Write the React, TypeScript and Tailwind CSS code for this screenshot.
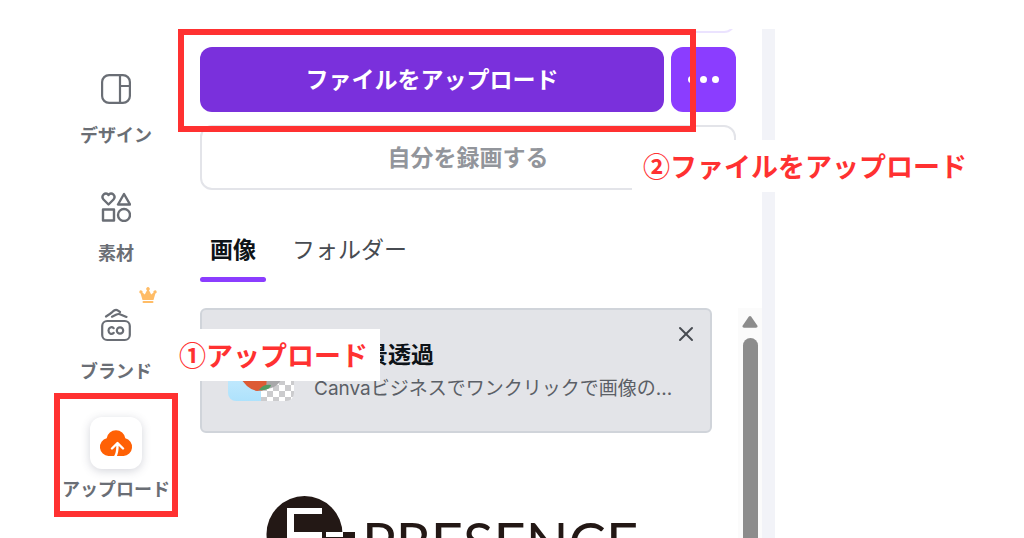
import { type ReactNode } from "react";
import { X } from "lucide-react";

const navItems = [
  { label: "デザイン", icon: <DesignIcon /> },
  { label: "素材", icon: <ElementsIcon /> },
  { label: "ブランド", icon: <BrandIcon />, premium: true },
  { label: "アップロード", icon: <CloudIcon />, active: true }
];

export default function App() {
  return (
    <main className="flex h-screen overflow-hidden bg-white pt-[29px] font-['Noto_Sans_CJK_JP',sans-serif] text-[#0e1318]">
      <SideNav />
      <UploadPanel />
    </main>
  );
}

function SideNav() {
  return (
    <nav className="ml-[54px] w-[124px] shrink-0 pt-[34px]">
      <ul className="flex flex-col gap-[35px]">
        {navItems.map((item) => (
          <li key={item.label} className="relative">
            <button type="button" className="flex w-full flex-col items-center gap-[7px] whitespace-nowrap text-[18px] leading-6 font-bold text-[#6a6e75]">
              <span className={item.active ? "grid size-[52px] place-items-center rounded-xl bg-white shadow-[0_2px_10px_rgba(60,64,90,0.22)]" : "grid size-[52px] place-items-center"}>
                {item.icon}
              </span>
              {item.label}
            </button>
            {item.premium && <CrownIcon className="absolute top-[-12px] left-[85px] h-4 w-[18px]" />}
            {item.active && <div className="pointer-events-none absolute inset-x-0 top-[-24px] bottom-[-17px] border-6 border-[#ff3131]" />}
          </li>
        ))}
      </ul>
    </nav>
  );
}

function UploadPanel() {
  return (
    <section className="relative flex max-w-[597px] flex-1 flex-col border-r-[13px] border-[#f2f3f8] pl-[22px]">
      <div className="mr-[26px] flex h-1 shrink-0 items-end overflow-hidden">
        <div className="h-12 w-full shrink-0 rounded-xl border-2 border-[#ebe3ff]" />
      </div>
      <div className="mt-[14px] mr-[26px] flex gap-[7px]">
        <button type="button" className="h-[65px] flex-1 rounded-xl bg-[#7a30dc] pb-[2px] text-[23px] font-bold text-white">ファイルをアップロード</button>
        <button type="button" aria-label="その他" className="flex h-[65px] w-[65px] items-center justify-center gap-[5px] rounded-xl bg-[#8b3dff]">
          <span className="size-[7px] rounded-full bg-white" />
          <span className="size-[7px] rounded-full bg-white" />
          <span className="size-[7px] rounded-full bg-white" />
        </button>
      </div>
      <button type="button" className="mt-[13px] mr-[26px] h-[65px] shrink-0 rounded-xl border-2 border-[#e3e4e9] pb-[2px] text-[23px] font-bold text-[#92959b]">自分を録画する</button>

      <div role="tablist" className="mt-[40px] flex gap-[18px] text-[23px] leading-9">
        <button type="button" role="tab" aria-selected="true" className="flex flex-col gap-[11px] font-bold">
          <span className="px-[10px]">画像</span>
          <span className="h-[5px] w-full rounded-full bg-[#8b3dff]" />
        </button>
        <button type="button" role="tab" aria-selected="false" className="flex flex-col px-2 text-[#474b51]">フォルダー</button>
      </div>

      <div className="mt-[26px] flex min-h-0 flex-1 gap-[26px]">
        <div className="min-w-0 flex-1">
          <Promo />
          <UploadedImage />
        </div>
        <Scrollbar />
      </div>

      <div className="pointer-events-none absolute top-0 left-0 h-[103px] w-[518px] border-6 border-[#ff3131]" />
      <Callout className="top-[300px] left-[-10px]">①アップロード</Callout>
      <Callout className="top-[111px] left-[454px]">②ファイルをアップロード</Callout>
    </section>
  );
}

function Promo() {
  return (
    <article className="relative flex h-[125px] items-start gap-5 rounded-md border-2 border-[#d0d4da] bg-[#e3e4e8] pt-[25px] pl-[26px]">
      <Thumbnail />
      <div className="min-w-0 whitespace-nowrap">
        <h2 className="flex h-9 items-center gap-2 text-[23px] font-bold">
          <CrownIcon className="h-[18px] w-5" />
          背景透過
        </h2>
        <p className="font-['Inter','Noto_Sans_CJK_JP',sans-serif] text-[19px] leading-9 text-[#5b5f66]">Canvaビジネスでワンクリックで画像の...</p>
      </div>
      <button type="button" aria-label="閉じる" className="absolute top-3 right-3 text-[#474b51]">
        <X className="size-6" strokeWidth={2} />
      </button>
    </article>
  );
}

function UploadedImage() {
  return (
    <figure className="mt-[63px] ml-[66px] flex items-start gap-[5px] text-[#231815]">
      <svg viewBox="0 0 91 76" className="h-[76px] w-[91px] shrink-0" aria-hidden="true">
        <circle cx="38.5" cy="38" r="38" fill="currentColor" />
        <path d="M21 12h35v6H28v18h28v6H28v19h28v6H21z" fill="#fff" />
        <path d="M75 36h14v6H75z" fill="currentColor" />
        <path d="M60 36h17v5H60z" fill="#fff" />
      </svg>
      <figcaption className="mt-[12px] font-['Lato',sans-serif] text-[56px] leading-[68px]">PRESENCE</figcaption>
    </figure>
  );
}

function Scrollbar() {
  return (
    <div className="flex w-6 shrink-0 flex-col items-center gap-[10px] bg-[#fbfbfb] pt-2" aria-hidden="true">
      <svg viewBox="0 0 16 12" className="h-3 w-4 shrink-0" fill="#8c8c8c">
        <path d="M6.700 .8q1.300-1.400 2.600 0l6 8.700q.9 2.100-1.300 2.300H2q-2.200-.2-1.300-2.300z" />
      </svg>
      <div className="w-[15px] flex-1 rounded-t-full bg-[#8c8c8c]" />
    </div>
  );
}

function Callout({ className, children }: { className: string; children: ReactNode }) {
  return (
    <p className={`absolute h-[52px] bg-white pr-[12px] pl-[11px] text-[27px] leading-[51px] font-bold whitespace-nowrap text-[#ff3131] ${className}`}>
      {children}
    </p>
  );
}

function Thumbnail() {
  return (
    <svg viewBox="0 0 66 66" className="size-[66px] shrink-0" aria-hidden="true">
      <defs>
        <clipPath id="thumb"><rect width="66" height="66" rx="8" /></clipPath>
        <pattern id="checker" width="12" height="12" x="33" y="2" patternUnits="userSpaceOnUse">
          <rect width="12" height="12" fill="#fff" />
          <path d="M0 0h6v6H0zM6 6h6v6H6z" fill="#cbcbcd" />
        </pattern>
        <linearGradient id="sky" x2="0" y2="1"><stop stopColor="#e4f6ff" /><stop offset="1" stopColor="#aee2fc" /></linearGradient>
      </defs>
      <g clipPath="url(#thumb)">
        <rect width="33" height="66" fill="url(#sky)" />
        <rect x="33" width="33" height="66" fill="url(#checker)" />
        <path d="M31 38h24q-2 14-16 16z" fill="#a8a8aa" />
        <path d="M11 40h28l-1 14q-4 2-9 2-11-2-18-16" fill="#dc5b35" />
        <path d="M31 55q4-6 12-5-1 6-12 5" fill="#4f9b62" />
      </g>
    </svg>
  );
}

function DesignIcon() {
  return (
    <svg viewBox="0 0 30 30" className="size-[30px]" fill="none" stroke="currentColor" strokeWidth="2.200">
      <rect x="1.100" y="1.100" width="27.800" height="27.800" rx="7" />
      <path d="M19 1v28M19 12h10" />
    </svg>
  );
}

function ElementsIcon() {
  return (
    <svg viewBox="0 0 30 30" className="size-[30px]" fill="none" stroke="currentColor" strokeWidth="2.400" strokeLinejoin="round">
      <path d="M7.500 12.500 2.500 7.500C-.5 4 4.500-1 7.500 3c3-4 8 1 5 4.500z" />
      <path d="M23 2 17 12.500h12z" />
      <rect x="2" y="17.500" width="11" height="11" />
      <circle cx="23" cy="23" r="6" />
    </svg>
  );
}

function BrandIcon() {
  return (
    <svg viewBox="0 0 30 34" className="h-[34px] w-[30px]" fill="none" stroke="currentColor" strokeWidth="2.200" strokeLinecap="round">
      <rect x="1.200" y="13" width="27.600" height="19" rx="5" />
      <path d="M5 8.500q4-2.500 6.500-4.700 3-3 5.500-1.200l2 1.400M11 8.700l4-2q2.500-1.200 4.500-.3l6 2.500" />
      <path d="M12.700 20.200c-2-2-5.200-.8-5.200 2.400s3.200 4.300 5.200 2.300" />
      <circle cx="19" cy="22.500" r="3.200" />
    </svg>
  );
}

function CrownIcon({ className }: { className: string }) {
  return (
    <svg viewBox="0 0 18 16" className={className} fill="#ffbc66" aria-hidden="true">
      <path d="M3.500 13 1.600 6.500A1.600 1.600 0 1 1 3.400 5.600L5.800 7.500 8 3.200a1.700 1.700 0 1 1 2 0L12.200 7.500l2.400-1.900a1.600 1.600 0 1 1 1.800.9L14.500 13z" />
      <rect x="3.500" y="14" width="11" height="2" rx="1" />
    </svg>
  );
}

function CloudIcon() {
  return (
    <svg viewBox="0 0 34 28" className="h-7 w-[34px]" fill="none">
      <path d="M14 27H9.500A9 9 0 0 1 7.700 9.300a9.400 9.400 0 0 1 18.600 0A9 9 0 0 1 24.500 27z" fill="#ff6105" />
      <path d="M16 28c2-3 2.500-6 2.500-12M13 19.500l5.500-5.500 5.500 5.500" stroke="#fff" strokeWidth="2.400" strokeLinecap="round" strokeLinejoin="round" />
    </svg>
  );
}
